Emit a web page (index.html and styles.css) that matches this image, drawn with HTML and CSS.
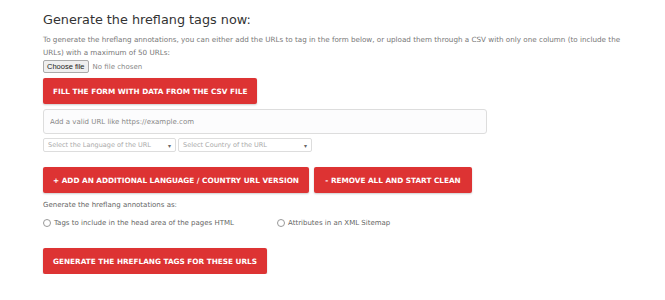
FILE: index.html
```html
<!DOCTYPE html>
<html lang="en">
<head>
    <meta charset="UTF-8">
    <meta name="viewport" content="width=device-width, initial-scale=1.0">
    <title>Hreflang Tags Generator</title>
    <link rel="stylesheet" href="styles.css">
</head>
<body>
    <div class="tool">
        <h2>Generate the hreflang tags now:</h2>
        <p class="intro">To generate the hreflang annotations, you can either add the URLs to tag in the form below, or upload them through a CSV with only one column (to include the URLs) with a maximum of 50 URLs:</p>

        <div class="file-row">
            <span class="file-btn">Choose file</span>
            <span class="file-name">No file chosen</span>
        </div>

        <button class="red-btn csv-btn">FILL THE FORM WITH DATA FROM THE CSV FILE</button>

        <div class="url-block">
            <input class="url-input" type="text" placeholder="Add a valid URL like https://example.com">
            <div class="select-row">
                <div class="select lang">Select the Language of the URL <span class="caret">&#9662;</span></div>
                <div class="select country">Select Country of the URL <span class="caret">&#9662;</span></div>
            </div>
        </div>

        <div class="btn-row">
            <button class="red-btn add-btn">+ ADD AN ADDITIONAL LANGUAGE / COUNTRY URL VERSION</button>
            <button class="red-btn clear-btn">- REMOVE ALL AND START CLEAN</button>
        </div>

        <p class="as-label">Generate the hreflang annotations as:</p>
        <div class="radio-row">
            <label class="radio"><span class="dot"></span>Tags to include in the head area of the pages HTML</label>
            <label class="radio"><span class="dot"></span>Attributes in an XML Sitemap</label>
        </div>

        <button class="red-btn go-btn">GENERATE THE HREFLANG TAGS FOR THESE URLS</button>
    </div>
</body>
</html>
```

FILE: styles.css
```css
body {
    margin: 0;
    background: #fff;
    font-family: "DejaVu Sans", sans-serif;
    color: #555;
}
.tool {
    padding: 10px 43px 0;
    display: flex;
    flex-direction: column;
    align-items: flex-start;
}
h2 {
    margin: 0;
    font-size: 12.8px;
    line-height: 20px;
    font-weight: normal;
    color: #333;
}
.intro {
    margin: 3px 0 0;
    width: 590px;
    font-size: 7.2px;
    line-height: 13px;
    color: #777;
}
.file-row {
    display: flex;
    align-items: center;
    gap: 4px;
    margin-top: 1px;
    height: 13px;
}
.file-btn {
    font-family: "Liberation Sans", sans-serif;
    font-size: 7.5px;
    color: #222;
    background: #efefef;
    border: 1px solid #aaa;
    border-radius: 2px;
    padding: 1px 3px;
    line-height: 9px;
}
.file-name {
    font-size: 7px;
    color: #888;
}
.red-btn {
    background: #dd3333;
    color: #fff;
    border: none;
    border-radius: 2px;
    font-family: "DejaVu Sans", sans-serif;
    font-weight: bold;
    font-size: 7.3px;
    height: 26px;
    padding: 0 10px;
    box-shadow: 0 1px 2px rgba(0, 0, 0, 0.2);
    white-space: nowrap;
}
.csv-btn {
    margin-top: 5px;
    width: 214px;
}
.url-block {
    margin-top: 5px;
    display: flex;
    flex-direction: column;
    gap: 4px;
}
.url-input {
    box-sizing: border-box;
    width: 444px;
    height: 25px;
    border: 1px solid #ddd;
    border-radius: 3px;
    background: #fcfcfd;
    padding: 0 6px;
    font-family: "DejaVu Sans", sans-serif;
    font-size: 7px;
    margin: 0;
}
.url-input::placeholder {
    color: #888;
}
.select-row {
    display: flex;
    gap: 2px;
}
.select {
    box-sizing: border-box;
    height: 14px;
    border: 1px solid #ddd;
    border-radius: 2px;
    font-size: 6.5px;
    color: #aaa;
    padding: 0 4px;
    display: flex;
    align-items: center;
    justify-content: space-between;
}
.lang { width: 133px; }
.country { width: 134px; }
.caret {
    font-size: 6px;
    color: #666;
}
.btn-row {
    display: flex;
    gap: 5px;
    margin-top: 15px;
}
.add-btn { width: 266px; }
.clear-btn { width: 158px; }
.as-label {
    margin: 7px 0 0;
    font-size: 7px;
    line-height: 10px;
    color: #666;
}
.radio-row {
    display: flex;
    margin-top: 8px;
    height: 10px;
}
.radio {
    display: flex;
    align-items: center;
    gap: 3px;
    font-size: 7px;
    color: #666;
}
.radio:first-child { width: 234px; }
.dot {
    width: 6px;
    height: 6px;
    border: 1px solid #999;
    border-radius: 50%;
}
.go-btn {
    margin-top: 20px;
    width: 224px;
}
```
